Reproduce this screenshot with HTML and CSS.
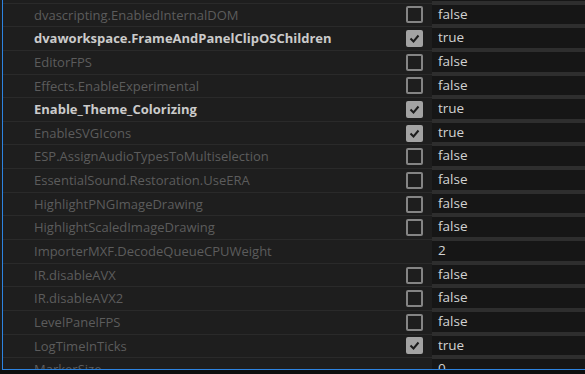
FILE: index.html
```html
<!DOCTYPE html>
<html lang="en">
  <head>
    <meta charset="UTF-8" />
    <meta name="viewport" content="width=device-width, initial-scale=1.0" />
    <title>Debug Database</title>
    <link rel="stylesheet" href="styles.css">
  </head>
  <body>
    <div class="panel">
      <div class="list">
        <div class="row"><span class="name"></span><span class="check"></span><span class="value"><span class="field"></span></span></div>
        <div class="row"><span class="name">dvascripting.EnabledInternalDOM</span><span class="check"><span class="box"></span></span><span class="value"><span class="field">false</span></span></div>
        <div class="row changed"><span class="name">dvaworkspace.FrameAndPanelClipOSChildren</span><span class="check"><span class="box on"><svg viewBox="0 0 17 17"><polyline points="4.5,8.5 7.5,11.5 12.5,5.5" /></svg></span></span><span class="value"><span class="field">true</span></span></div>
        <div class="row"><span class="name">EditorFPS</span><span class="check"><span class="box"></span></span><span class="value"><span class="field">false</span></span></div>
        <div class="row"><span class="name">Effects.EnableExperimental</span><span class="check"><span class="box"></span></span><span class="value"><span class="field">false</span></span></div>
        <div class="row changed"><span class="name">Enable_Theme_Colorizing</span><span class="check"><span class="box on"><svg viewBox="0 0 17 17"><polyline points="4.5,8.5 7.5,11.5 12.5,5.5" /></svg></span></span><span class="value"><span class="field">true</span></span></div>
        <div class="row"><span class="name">EnableSVGIcons</span><span class="check"><span class="box on"><svg viewBox="0 0 17 17"><polyline points="4.5,8.5 7.5,11.5 12.5,5.5" /></svg></span></span><span class="value"><span class="field">true</span></span></div>
        <div class="row"><span class="name">ESP.AssignAudioTypesToMultiselection</span><span class="check"><span class="box"></span></span><span class="value"><span class="field">false</span></span></div>
        <div class="row"><span class="name">EssentialSound.Restoration.UseERA</span><span class="check"><span class="box"></span></span><span class="value"><span class="field">false</span></span></div>
        <div class="row"><span class="name">HighlightPNGImageDrawing</span><span class="check"><span class="box"></span></span><span class="value"><span class="field">false</span></span></div>
        <div class="row"><span class="name">HighlightScaledImageDrawing</span><span class="check"><span class="box"></span></span><span class="value"><span class="field">false</span></span></div>
        <div class="row"><span class="name">ImporterMXF.DecodeQueueCPUWeight</span><span class="check"></span><span class="value"><span class="field">2</span></span></div>
        <div class="row"><span class="name">IR.disableAVX</span><span class="check"><span class="box"></span></span><span class="value"><span class="field">false</span></span></div>
        <div class="row"><span class="name">IR.disableAVX2</span><span class="check"><span class="box"></span></span><span class="value"><span class="field">false</span></span></div>
        <div class="row"><span class="name">LevelPanelFPS</span><span class="check"><span class="box"></span></span><span class="value"><span class="field">false</span></span></div>
        <div class="row"><span class="name">LogTimeInTicks</span><span class="check"><span class="box on"><svg viewBox="0 0 17 17"><polyline points="4.5,8.5 7.5,11.5 12.5,5.5" /></svg></span></span><span class="value"><span class="field">true</span></span></div>
        <div class="row"><span class="name">MarkerSize</span><span class="check"></span><span class="value"><span class="field">0</span></span></div>
      </div>
    </div>
    <div class="status"></div>
  </body>
</html>
```

FILE: styles.css
```css
body {
  margin: 0;
  background: #1b1b1b;
  font-family: "Open Sans", "Noto Sans", sans-serif;
  font-size: 13px;
}

.panel {
  margin-left: 2px;
  height: 370px;
  box-sizing: border-box;
  border-left: 1px solid #2d83e0;
  border-bottom: 1px solid #2d83e0;
  background: #1e1e1e;
  overflow: hidden;
}

.status {
  height: 4px;
  background: #0e0e0e;
}

.list {
  margin-top: -21px;
}

.row {
  display: flex;
  height: 23.65px;
}

.name {
  width: 366px;
  padding-left: 31px;
  border-top: 1px solid #2a2a2a;
  color: #5c5c5c;
  line-height: 22px;
  white-space: nowrap;
  overflow: hidden;
}

.changed .name {
  color: #cbcbcb;
  font-weight: bold;
}

.check {
  width: 32px;
  border-top: 1px solid #2a2a2a;
  display: flex;
  align-items: center;
  padding-left: 6px;
  box-sizing: border-box;
}

.box {
  width: 17px;
  height: 17px;
  box-sizing: border-box;
  border: 2px solid #858585;
  border-radius: 2px;
}

.box.on {
  background: #a3a3a3;
  border-color: #a3a3a3;
}

.box svg {
  display: block;
  width: 17px;
  height: 17px;
  margin: -2px;
}

.box polyline {
  fill: none;
  stroke: #1c1c1c;
  stroke-width: 2;
}

.value {
  flex: 1;
  background: #2e2e2e;
  padding: 2px 0;
  display: flex;
}

.field {
  flex: 1;
  background: #161616;
  color: #d2d2d2;
  padding-left: 6px;
  line-height: 19px;
  font-size: 13.5px;
}
```
